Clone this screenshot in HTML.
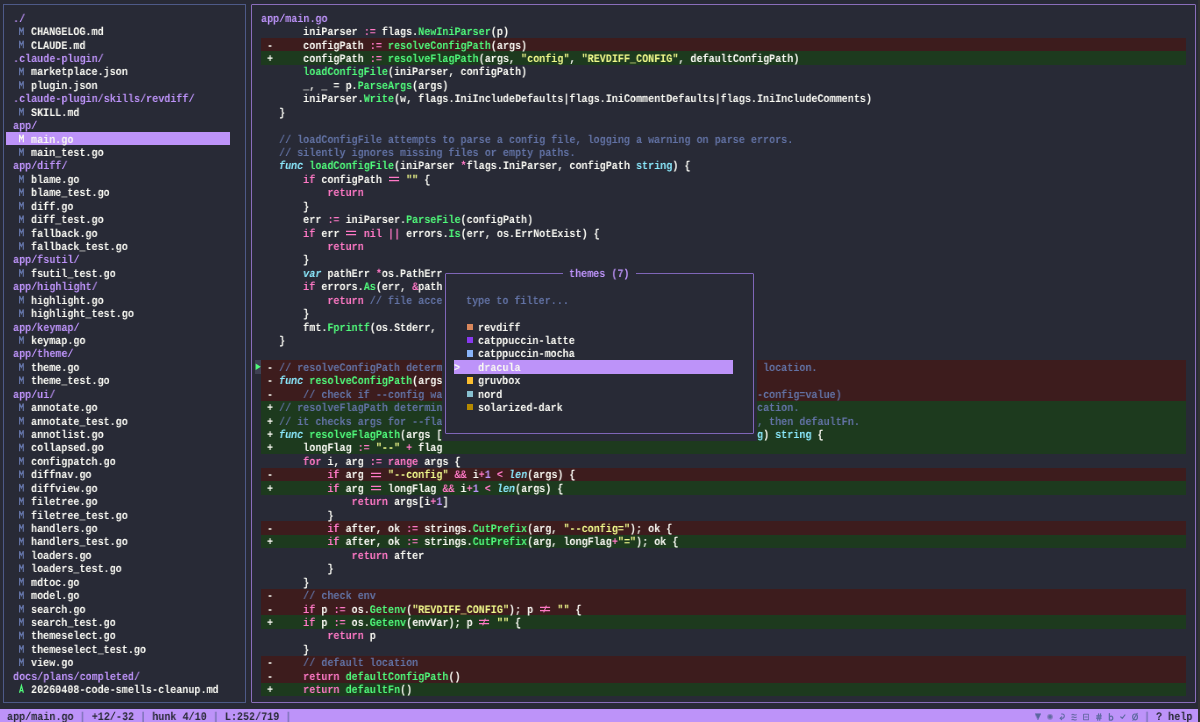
<!DOCTYPE html><html><head><meta charset="utf-8"><style>
html,body{margin:0;padding:0}
body{width:1200px;height:722px;overflow:hidden;background:#282a36;position:relative;font-family:"Liberation Mono",monospace;font-size:11.5px}
.t{position:absolute;white-space:pre;line-height:13.43px;height:13.43px;font-weight:bold;will-change:transform;text-rendering:geometricPrecision;transform-origin:0 0;transform:scale(0.87668,1.0);color:#f8f8f2}
i{font-style:normal}
.f{color:#f8f8f2} .c{color:#6272a4} .k{color:#ff79c6} .g{color:#50fa7b} .y{color:#f1fa8c}
.p{color:#bd93f9} .cy{color:#8be9fd} .ci{color:#8be9fd;font-style:italic} .d{color:#282a36} .sep{color:#7570b0} .mm{color:#6272a4;font-weight:normal;-webkit-text-stroke:0} .mk{color:#50fa7b;font-weight:normal;-webkit-text-stroke:0}
</style></head><body><div style="position:absolute;left:1198.00px;top:0.00px;width:2.00px;height:722.00px;background:#323232;"></div>
<div style="position:absolute;left:6.00px;top:132.01px;width:224.40px;height:13.43px;background:#bd93f9;"></div>
<b class="t" style="left:12.57px;top:12.64px;"><i class="p">./</i></b>
<b class="t" style="left:30.73px;top:26.07px;"><i class="f">CHANGELOG.md</i></b>
<b class="t" style="left:30.73px;top:39.50px;"><i class="f">CLAUDE.md</i></b>
<b class="t" style="left:12.57px;top:52.93px;"><i class="p">.claude-plugin/</i></b>
<b class="t" style="left:30.73px;top:66.36px;"><i class="f">marketplace.json</i></b>
<b class="t" style="left:30.73px;top:79.79px;"><i class="f">plugin.json</i></b>
<b class="t" style="left:12.57px;top:93.22px;"><i class="p">.claude-plugin/skills/revdiff/</i></b>
<b class="t" style="left:30.73px;top:106.65px;"><i class="f">SKILL.md</i></b>
<b class="t" style="left:12.57px;top:120.08px;"><i class="p">app/</i></b>
<b class="t" style="left:30.73px;top:133.51px;"><i class="f">main.go</i></b>
<b class="t" style="left:30.73px;top:146.94px;"><i class="f">main_test.go</i></b>
<b class="t" style="left:12.57px;top:160.37px;"><i class="p">app/diff/</i></b>
<b class="t" style="left:30.73px;top:173.80px;"><i class="f">blame.go</i></b>
<b class="t" style="left:30.73px;top:187.23px;"><i class="f">blame_test.go</i></b>
<b class="t" style="left:30.73px;top:200.66px;"><i class="f">diff.go</i></b>
<b class="t" style="left:30.73px;top:214.09px;"><i class="f">diff_test.go</i></b>
<b class="t" style="left:30.73px;top:227.52px;"><i class="f">fallback.go</i></b>
<b class="t" style="left:30.73px;top:240.95px;"><i class="f">fallback_test.go</i></b>
<b class="t" style="left:12.57px;top:254.38px;"><i class="p">app/fsutil/</i></b>
<b class="t" style="left:30.73px;top:267.81px;"><i class="f">fsutil_test.go</i></b>
<b class="t" style="left:12.57px;top:281.24px;"><i class="p">app/highlight/</i></b>
<b class="t" style="left:30.73px;top:294.67px;"><i class="f">highlight.go</i></b>
<b class="t" style="left:30.73px;top:308.10px;"><i class="f">highlight_test.go</i></b>
<b class="t" style="left:12.57px;top:321.53px;"><i class="p">app/keymap/</i></b>
<b class="t" style="left:30.73px;top:334.96px;"><i class="f">keymap.go</i></b>
<b class="t" style="left:12.57px;top:348.39px;"><i class="p">app/theme/</i></b>
<b class="t" style="left:30.73px;top:361.82px;"><i class="f">theme.go</i></b>
<b class="t" style="left:30.73px;top:375.25px;"><i class="f">theme_test.go</i></b>
<b class="t" style="left:12.57px;top:388.68px;"><i class="p">app/ui/</i></b>
<b class="t" style="left:30.73px;top:402.11px;"><i class="f">annotate.go</i></b>
<b class="t" style="left:30.73px;top:415.54px;"><i class="f">annotate_test.go</i></b>
<b class="t" style="left:30.73px;top:428.97px;"><i class="f">annotlist.go</i></b>
<b class="t" style="left:30.73px;top:442.40px;"><i class="f">collapsed.go</i></b>
<b class="t" style="left:30.73px;top:455.83px;"><i class="f">configpatch.go</i></b>
<b class="t" style="left:30.73px;top:469.26px;"><i class="f">diffnav.go</i></b>
<b class="t" style="left:30.73px;top:482.69px;"><i class="f">diffview.go</i></b>
<b class="t" style="left:30.73px;top:496.12px;"><i class="f">filetree.go</i></b>
<b class="t" style="left:30.73px;top:509.55px;"><i class="f">filetree_test.go</i></b>
<b class="t" style="left:30.73px;top:522.98px;"><i class="f">handlers.go</i></b>
<b class="t" style="left:30.73px;top:536.41px;"><i class="f">handlers_test.go</i></b>
<b class="t" style="left:30.73px;top:549.84px;"><i class="f">loaders.go</i></b>
<b class="t" style="left:30.73px;top:563.27px;"><i class="f">loaders_test.go</i></b>
<b class="t" style="left:30.73px;top:576.70px;"><i class="f">mdtoc.go</i></b>
<b class="t" style="left:30.73px;top:590.13px;"><i class="f">model.go</i></b>
<b class="t" style="left:30.73px;top:603.56px;"><i class="f">search.go</i></b>
<b class="t" style="left:30.73px;top:616.99px;"><i class="f">search_test.go</i></b>
<b class="t" style="left:30.73px;top:630.42px;"><i class="f">themeselect.go</i></b>
<b class="t" style="left:30.73px;top:643.85px;"><i class="f">themeselect_test.go</i></b>
<b class="t" style="left:30.73px;top:657.28px;"><i class="f">view.go</i></b>
<b class="t" style="left:12.57px;top:670.71px;"><i class="p">docs/plans/completed/</i></b>
<b class="t" style="left:30.73px;top:684.14px;"><i class="f">20260408-code-smells-cleanup.md</i></b>
<svg style="position:absolute;left:0;top:0" width="250" height="722" fill="none" stroke-width="1.2"><path d="M19.59 34.91 V27.41 L21.45 31.47 L23.32 27.41 V34.91" stroke="#6272a4"/><path d="M19.59 48.34 V40.84 L21.45 44.90 L23.32 40.84 V48.34" stroke="#6272a4"/><path d="M19.59 75.20 V67.70 L21.45 71.76 L23.32 67.70 V75.20" stroke="#6272a4"/><path d="M19.59 88.63 V81.13 L21.45 85.19 L23.32 81.13 V88.63" stroke="#6272a4"/><path d="M19.59 115.49 V107.99 L21.45 112.05 L23.32 107.99 V115.49" stroke="#6272a4"/><path d="M19.59 142.35 V134.85 L21.45 138.91 L23.32 134.85 V142.35" stroke="#f8f8f2"/><path d="M19.59 155.78 V148.28 L21.45 152.34 L23.32 148.28 V155.78" stroke="#6272a4"/><path d="M19.59 182.64 V175.14 L21.45 179.20 L23.32 175.14 V182.64" stroke="#6272a4"/><path d="M19.59 196.07 V188.57 L21.45 192.63 L23.32 188.57 V196.07" stroke="#6272a4"/><path d="M19.59 209.50 V202.00 L21.45 206.06 L23.32 202.00 V209.50" stroke="#6272a4"/><path d="M19.59 222.93 V215.43 L21.45 219.49 L23.32 215.43 V222.93" stroke="#6272a4"/><path d="M19.59 236.36 V228.86 L21.45 232.92 L23.32 228.86 V236.36" stroke="#6272a4"/><path d="M19.59 249.79 V242.29 L21.45 246.35 L23.32 242.29 V249.79" stroke="#6272a4"/><path d="M19.59 276.65 V269.15 L21.45 273.21 L23.32 269.15 V276.65" stroke="#6272a4"/><path d="M19.59 303.51 V296.01 L21.45 300.07 L23.32 296.01 V303.51" stroke="#6272a4"/><path d="M19.59 316.94 V309.44 L21.45 313.50 L23.32 309.44 V316.94" stroke="#6272a4"/><path d="M19.59 343.80 V336.30 L21.45 340.36 L23.32 336.30 V343.80" stroke="#6272a4"/><path d="M19.59 370.66 V363.16 L21.45 367.22 L23.32 363.16 V370.66" stroke="#6272a4"/><path d="M19.59 384.09 V376.59 L21.45 380.65 L23.32 376.59 V384.09" stroke="#6272a4"/><path d="M19.59 410.95 V403.45 L21.45 407.51 L23.32 403.45 V410.95" stroke="#6272a4"/><path d="M19.59 424.38 V416.88 L21.45 420.94 L23.32 416.88 V424.38" stroke="#6272a4"/><path d="M19.59 437.81 V430.31 L21.45 434.37 L23.32 430.31 V437.81" stroke="#6272a4"/><path d="M19.59 451.24 V443.74 L21.45 447.80 L23.32 443.74 V451.24" stroke="#6272a4"/><path d="M19.59 464.67 V457.17 L21.45 461.23 L23.32 457.17 V464.67" stroke="#6272a4"/><path d="M19.59 478.10 V470.60 L21.45 474.66 L23.32 470.60 V478.10" stroke="#6272a4"/><path d="M19.59 491.53 V484.03 L21.45 488.09 L23.32 484.03 V491.53" stroke="#6272a4"/><path d="M19.59 504.96 V497.46 L21.45 501.52 L23.32 497.46 V504.96" stroke="#6272a4"/><path d="M19.59 518.39 V510.89 L21.45 514.95 L23.32 510.89 V518.39" stroke="#6272a4"/><path d="M19.59 531.82 V524.32 L21.45 528.38 L23.32 524.32 V531.82" stroke="#6272a4"/><path d="M19.59 545.25 V537.75 L21.45 541.81 L23.32 537.75 V545.25" stroke="#6272a4"/><path d="M19.59 558.68 V551.18 L21.45 555.24 L23.32 551.18 V558.68" stroke="#6272a4"/><path d="M19.59 572.11 V564.61 L21.45 568.67 L23.32 564.61 V572.11" stroke="#6272a4"/><path d="M19.59 585.54 V578.04 L21.45 582.10 L23.32 578.04 V585.54" stroke="#6272a4"/><path d="M19.59 598.97 V591.47 L21.45 595.53 L23.32 591.47 V598.97" stroke="#6272a4"/><path d="M19.59 612.40 V604.90 L21.45 608.96 L23.32 604.90 V612.40" stroke="#6272a4"/><path d="M19.59 625.83 V618.33 L21.45 622.39 L23.32 618.33 V625.83" stroke="#6272a4"/><path d="M19.59 639.26 V631.76 L21.45 635.82 L23.32 631.76 V639.26" stroke="#6272a4"/><path d="M19.59 652.69 V645.19 L21.45 649.25 L23.32 645.19 V652.69" stroke="#6272a4"/><path d="M19.59 666.12 V658.62 L21.45 662.68 L23.32 658.62 V666.12" stroke="#6272a4"/><path d="M19.52 692.74 L21.45 685.64 L23.38 692.74 M20.23 690.54 H22.68" stroke="#50fa7b"/></svg>
<div style="position:absolute;left:3px;top:4px;width:241px;height:697px;border:1px solid #4e5a88;border-radius:0px"></div>
<div style="position:absolute;left:251px;top:4px;width:943px;height:697px;border:1px solid #8a6ebb;border-radius:1px"></div>
<div style="position:absolute;left:260.62px;top:38.00px;width:925.65px;height:13.43px;background:#3d1c1d;"></div>
<div style="position:absolute;left:260.62px;top:51.43px;width:925.65px;height:13.43px;background:#1d3a1e;"></div>
<div style="position:absolute;left:260.62px;top:360.32px;width:925.65px;height:13.43px;background:#3d1c1d;"></div>
<div style="position:absolute;left:260.62px;top:373.75px;width:925.65px;height:13.43px;background:#3d1c1d;"></div>
<div style="position:absolute;left:260.62px;top:387.18px;width:925.65px;height:13.43px;background:#3d1c1d;"></div>
<div style="position:absolute;left:260.62px;top:400.61px;width:925.65px;height:13.43px;background:#1d3a1e;"></div>
<div style="position:absolute;left:260.62px;top:414.04px;width:925.65px;height:13.43px;background:#1d3a1e;"></div>
<div style="position:absolute;left:260.62px;top:427.47px;width:925.65px;height:13.43px;background:#1d3a1e;"></div>
<div style="position:absolute;left:260.62px;top:440.90px;width:925.65px;height:13.43px;background:#1d3a1e;"></div>
<div style="position:absolute;left:260.62px;top:467.76px;width:925.65px;height:13.43px;background:#3d1c1d;"></div>
<div style="position:absolute;left:260.62px;top:481.19px;width:925.65px;height:13.43px;background:#1d3a1e;"></div>
<div style="position:absolute;left:260.62px;top:521.48px;width:925.65px;height:13.43px;background:#3d1c1d;"></div>
<div style="position:absolute;left:260.62px;top:534.91px;width:925.65px;height:13.43px;background:#1d3a1e;"></div>
<div style="position:absolute;left:260.62px;top:588.63px;width:925.65px;height:13.43px;background:#3d1c1d;"></div>
<div style="position:absolute;left:260.62px;top:602.06px;width:925.65px;height:13.43px;background:#3d1c1d;"></div>
<div style="position:absolute;left:260.62px;top:615.49px;width:925.65px;height:13.43px;background:#1d3a1e;"></div>
<div style="position:absolute;left:260.62px;top:655.78px;width:925.65px;height:13.43px;background:#3d1c1d;"></div>
<div style="position:absolute;left:260.62px;top:669.21px;width:925.65px;height:13.43px;background:#3d1c1d;"></div>
<div style="position:absolute;left:260.62px;top:682.64px;width:925.65px;height:13.43px;background:#1d3a1e;"></div>
<div style="position:absolute;left:254.57px;top:360.32px;width:6.05px;height:13.43px;background:#3e4052;"></div>
<svg style="position:absolute;left:254.57px;top:360.32px" width="6.05" height="13.43" viewBox="0 0 6.05 13.43"><path d="M0.6 3.4 L5.8 6.7 L0.6 10 Z" fill="#50fa7b"/></svg>
<b class="t" style="left:260.62px;top:12.64px;"><i class="p">app/main.go</i></b>
<b class="t" style="left:278.78px;top:26.07px;"><i class="f">    iniParser </i><i class="k">:=</i><i class="f"> flags.</i><i class="g">NewIniParser</i><i class="f">(p)</i></b>
<b class="t" style="left:266.68px;top:39.50px;"><i class="f">-</i></b>
<b class="t" style="left:278.78px;top:39.50px;"><i class="f">    configPath </i><i class="k">:=</i><i class="f"> </i><i class="g">resolveConfigPath</i><i class="f">(args)</i></b>
<b class="t" style="left:266.68px;top:52.93px;"><i class="f">+</i></b>
<b class="t" style="left:278.78px;top:52.93px;"><i class="f">    configPath </i><i class="k">:=</i><i class="f"> </i><i class="g">resolveFlagPath</i><i class="f">(args, </i><i class="y">&quot;config&quot;</i><i class="f">, </i><i class="y">&quot;REVDIFF_CONFIG&quot;</i><i class="f">, defaultConfigPath)</i></b>
<b class="t" style="left:278.78px;top:66.36px;"><i class="f">    </i><i class="g">loadConfigFile</i><i class="f">(iniParser, configPath)</i></b>
<b class="t" style="left:278.78px;top:79.79px;"><i class="f">    _, _ = p.</i><i class="g">ParseArgs</i><i class="f">(args)</i></b>
<b class="t" style="left:278.78px;top:93.22px;"><i class="f">    iniParser.</i><i class="g">Write</i><i class="f">(w, flags.IniIncludeDefaults|flags.IniCommentDefaults|flags.IniIncludeComments)</i></b>
<b class="t" style="left:278.78px;top:106.65px;"><i class="f">}</i></b>
<b class="t" style="left:278.78px;top:133.51px;"><i class="c">// loadConfigFile attempts to parse a config file, logging a warning on parse errors.</i></b>
<b class="t" style="left:278.78px;top:146.94px;"><i class="c">// silently ignores missing files or empty paths.</i></b>
<b class="t" style="left:278.78px;top:160.37px;"><i class="ci">func</i><i class="f"> </i><i class="g">loadConfigFile</i><i class="f">(iniParser </i><i class="k">*</i><i class="f">flags.IniParser, configPath </i><i class="cy">string</i><i class="f">) {</i></b>
<b class="t" style="left:278.78px;top:173.80px;"><i class="f">    </i><i class="k">if</i><i class="f"> configPath </i><i class="k">  </i><i class="f"> </i><i class="y">&quot;&quot;</i><i class="f"> {</i></b>
<b class="t" style="left:278.78px;top:187.23px;"><i class="f">        </i><i class="k">return</i></b>
<b class="t" style="left:278.78px;top:200.66px;"><i class="f">    }</i></b>
<b class="t" style="left:278.78px;top:214.09px;"><i class="f">    err </i><i class="k">:=</i><i class="f"> iniParser.</i><i class="g">ParseFile</i><i class="f">(configPath)</i></b>
<b class="t" style="left:278.78px;top:227.52px;"><i class="f">    </i><i class="k">if</i><i class="f"> err </i><i class="k">  </i><i class="f"> </i><i class="k">nil</i><i class="f"> </i><i class="k">||</i><i class="f"> errors.</i><i class="g">Is</i><i class="f">(err, os.ErrNotExist) {</i></b>
<b class="t" style="left:278.78px;top:240.95px;"><i class="f">        </i><i class="k">return</i></b>
<b class="t" style="left:278.78px;top:254.38px;"><i class="f">    }</i></b>
<b class="t" style="left:278.78px;top:267.81px;"><i class="f">    </i><i class="ci">var</i><i class="f"> pathErr </i><i class="k">*</i><i class="f">os.PathErr</i></b>
<b class="t" style="left:278.78px;top:281.24px;"><i class="f">    </i><i class="k">if</i><i class="f"> errors.</i><i class="g">As</i><i class="f">(err, </i><i class="k">&amp;</i><i class="f">path</i></b>
<b class="t" style="left:278.78px;top:294.67px;"><i class="f">        </i><i class="k">return</i><i class="f"> </i><i class="c">// file acce</i></b>
<b class="t" style="left:278.78px;top:308.10px;"><i class="f">    }</i></b>
<b class="t" style="left:278.78px;top:321.53px;"><i class="f">    fmt.</i><i class="g">Fprintf</i><i class="f">(os.Stderr, </i></b>
<b class="t" style="left:278.78px;top:334.96px;"><i class="f">}</i></b>
<b class="t" style="left:266.68px;top:361.82px;"><i class="f">-</i></b>
<b class="t" style="left:278.78px;top:361.82px;"><i class="c">// resolveConfigPath determ</i></b>
<b class="t" style="left:266.68px;top:375.25px;"><i class="f">-</i></b>
<b class="t" style="left:278.78px;top:375.25px;"><i class="ci">func</i><i class="f"> </i><i class="g">resolveConfigPath</i><i class="f">(args</i></b>
<b class="t" style="left:266.68px;top:388.68px;"><i class="f">-</i></b>
<b class="t" style="left:278.78px;top:388.68px;"><i class="f">    </i><i class="c">// check if --config wa</i></b>
<b class="t" style="left:266.68px;top:402.11px;"><i class="f">+</i></b>
<b class="t" style="left:278.78px;top:402.11px;"><i class="c">// resolveFlagPath determin</i></b>
<b class="t" style="left:266.68px;top:415.54px;"><i class="f">+</i></b>
<b class="t" style="left:278.78px;top:415.54px;"><i class="c">// it checks args for --fla</i></b>
<b class="t" style="left:266.68px;top:428.97px;"><i class="f">+</i></b>
<b class="t" style="left:278.78px;top:428.97px;"><i class="ci">func</i><i class="f"> </i><i class="g">resolveFlagPath</i><i class="f">(args [</i></b>
<b class="t" style="left:266.68px;top:442.40px;"><i class="f">+</i></b>
<b class="t" style="left:278.78px;top:442.40px;"><i class="f">    longFlag </i><i class="k">:=</i><i class="f"> </i><i class="y">&quot;--&quot;</i><i class="f"> </i><i class="k">+</i><i class="f"> flag</i></b>
<b class="t" style="left:278.78px;top:455.83px;"><i class="f">    </i><i class="k">for</i><i class="f"> i, arg </i><i class="k">:=</i><i class="f"> </i><i class="k">range</i><i class="f"> args {</i></b>
<b class="t" style="left:266.68px;top:469.26px;"><i class="f">-</i></b>
<b class="t" style="left:278.78px;top:469.26px;"><i class="f">        </i><i class="k">if</i><i class="f"> arg </i><i class="k">  </i><i class="f"> </i><i class="y">&quot;--config&quot;</i><i class="f"> </i><i class="k">&amp;&amp;</i><i class="f"> i</i><i class="k">+</i><i class="p">1</i><i class="f"> </i><i class="k">&lt;</i><i class="f"> </i><i class="ci">len</i><i class="f">(args) {</i></b>
<b class="t" style="left:266.68px;top:482.69px;"><i class="f">+</i></b>
<b class="t" style="left:278.78px;top:482.69px;"><i class="f">        </i><i class="k">if</i><i class="f"> arg </i><i class="k">  </i><i class="f"> longFlag </i><i class="k">&amp;&amp;</i><i class="f"> i</i><i class="k">+</i><i class="p">1</i><i class="f"> </i><i class="k">&lt;</i><i class="f"> </i><i class="ci">len</i><i class="f">(args) {</i></b>
<b class="t" style="left:278.78px;top:496.12px;"><i class="f">            </i><i class="k">return</i><i class="f"> args[i</i><i class="k">+</i><i class="p">1</i><i class="f">]</i></b>
<b class="t" style="left:278.78px;top:509.55px;"><i class="f">        }</i></b>
<b class="t" style="left:266.68px;top:522.98px;"><i class="f">-</i></b>
<b class="t" style="left:278.78px;top:522.98px;"><i class="f">        </i><i class="k">if</i><i class="f"> after, ok </i><i class="k">:=</i><i class="f"> strings.</i><i class="g">CutPrefix</i><i class="f">(arg, </i><i class="y">&quot;--config=&quot;</i><i class="f">); ok {</i></b>
<b class="t" style="left:266.68px;top:536.41px;"><i class="f">+</i></b>
<b class="t" style="left:278.78px;top:536.41px;"><i class="f">        </i><i class="k">if</i><i class="f"> after, ok </i><i class="k">:=</i><i class="f"> strings.</i><i class="g">CutPrefix</i><i class="f">(arg, longFlag</i><i class="k">+</i><i class="y">&quot;=&quot;</i><i class="f">); ok {</i></b>
<b class="t" style="left:278.78px;top:549.84px;"><i class="f">            </i><i class="k">return</i><i class="f"> after</i></b>
<b class="t" style="left:278.78px;top:563.27px;"><i class="f">        }</i></b>
<b class="t" style="left:278.78px;top:576.70px;"><i class="f">    }</i></b>
<b class="t" style="left:266.68px;top:590.13px;"><i class="f">-</i></b>
<b class="t" style="left:278.78px;top:590.13px;"><i class="f">    </i><i class="c">// check env</i></b>
<b class="t" style="left:266.68px;top:603.56px;"><i class="f">-</i></b>
<b class="t" style="left:278.78px;top:603.56px;"><i class="f">    </i><i class="k">if</i><i class="f"> p </i><i class="k">:=</i><i class="f"> os.</i><i class="g">Getenv</i><i class="f">(</i><i class="y">&quot;REVDIFF_CONFIG&quot;</i><i class="f">); p </i><i class="k">  </i><i class="f"> </i><i class="y">&quot;&quot;</i><i class="f"> {</i></b>
<b class="t" style="left:266.68px;top:616.99px;"><i class="f">+</i></b>
<b class="t" style="left:278.78px;top:616.99px;"><i class="f">    </i><i class="k">if</i><i class="f"> p </i><i class="k">:=</i><i class="f"> os.</i><i class="g">Getenv</i><i class="f">(envVar); p </i><i class="k">  </i><i class="f"> </i><i class="y">&quot;&quot;</i><i class="f"> {</i></b>
<b class="t" style="left:278.78px;top:630.42px;"><i class="f">        </i><i class="k">return</i><i class="f"> p</i></b>
<b class="t" style="left:278.78px;top:643.85px;"><i class="f">    }</i></b>
<b class="t" style="left:266.68px;top:657.28px;"><i class="f">-</i></b>
<b class="t" style="left:278.78px;top:657.28px;"><i class="f">    </i><i class="c">// default location</i></b>
<b class="t" style="left:266.68px;top:670.71px;"><i class="f">-</i></b>
<b class="t" style="left:278.78px;top:670.71px;"><i class="f">    </i><i class="k">return</i><i class="f"> </i><i class="g">defaultConfigPath</i><i class="f">()</i></b>
<b class="t" style="left:266.68px;top:684.14px;"><i class="f">+</i></b>
<b class="t" style="left:278.78px;top:684.14px;"><i class="f">    </i><i class="k">return</i><i class="f"> </i><i class="g">defaultFn</i><i class="f">()</i></b>
<b class="t" style="left:756.73px;top:361.82px;"><i class="c"> location.</i></b>
<b class="t" style="left:756.73px;top:388.68px;"><i class="c">-config=value)</i></b>
<b class="t" style="left:756.73px;top:402.11px;"><i class="c">cation.</i></b>
<b class="t" style="left:756.73px;top:415.54px;"><i class="c">, then defaultFn.</i></b>
<b class="t" style="left:756.73px;top:428.97px;"><i class="cy">g</i><i class="f">) </i><i class="cy">string</i><i class="f"> {</i></b>
<svg style="position:absolute;left:387.68px;top:172.30px" width="12.1" height="13.43" viewBox="0 0 12.1 13.43" fill="none"><path d="M1.0 5.4 H11.1 M1.0 8.6 H11.1" stroke="#ff79c6" stroke-width="1.15"/></svg>
<svg style="position:absolute;left:345.32px;top:226.02px" width="12.1" height="13.43" viewBox="0 0 12.1 13.43" fill="none"><path d="M1.0 5.4 H11.1 M1.0 8.6 H11.1" stroke="#ff79c6" stroke-width="1.15"/></svg>
<svg style="position:absolute;left:369.53px;top:467.76px" width="12.1" height="13.43" viewBox="0 0 12.1 13.43" fill="none"><path d="M1.0 5.4 H11.1 M1.0 8.6 H11.1" stroke="#ff79c6" stroke-width="1.15"/></svg>
<svg style="position:absolute;left:369.53px;top:481.19px" width="12.1" height="13.43" viewBox="0 0 12.1 13.43" fill="none"><path d="M1.0 5.4 H11.1 M1.0 8.6 H11.1" stroke="#ff79c6" stroke-width="1.15"/></svg>
<svg style="position:absolute;left:538.92px;top:602.06px" width="12.1" height="13.43" viewBox="0 0 12.1 13.43" fill="none"><path d="M1.0 5.4 H11.1 M1.0 8.6 H11.1" stroke="#ff79c6" stroke-width="1.15"/><path d="M7.4 3.6 L4.7 10.4" stroke="#ff79c6" stroke-width="1.1"/></svg>
<svg style="position:absolute;left:478.43px;top:615.49px" width="12.1" height="13.43" viewBox="0 0 12.1 13.43" fill="none"><path d="M1.0 5.4 H11.1 M1.0 8.6 H11.1" stroke="#ff79c6" stroke-width="1.15"/><path d="M7.4 3.6 L4.7 10.4" stroke="#ff79c6" stroke-width="1.1"/></svg>
<div style="position:absolute;left:442.12px;top:266.31px;width:314.60px;height:174.59px;background:#282a36;"></div>
<div style="position:absolute;left:445px;top:273px;width:307px;height:159px;border:1px solid #7f66b8;border-radius:1px"></div>
<div style="position:absolute;left:563.12px;top:270.00px;width:72.60px;height:5.00px;background:#282a36;"></div>
<b class="t" style="left:569.17px;top:267.81px;"><i class="p">themes (7)</i></b>
<b class="t" style="left:466.32px;top:294.67px;"><i class="c">type to filter...</i></b>
<div style="position:absolute;left:454.23px;top:360.32px;width:278.30px;height:13.43px;background:#bd93f9;"></div>
<div style="position:absolute;left:466.62px;top:323.63px;width:6.20px;height:6.20px;background:#d9875c;"></div>
<b class="t" style="left:478.43px;top:321.53px;"><i class="f">revdiff</i></b>
<div style="position:absolute;left:466.62px;top:337.06px;width:6.20px;height:6.20px;background:#8839ef;"></div>
<b class="t" style="left:478.43px;top:334.96px;"><i class="f">catppuccin-latte</i></b>
<div style="position:absolute;left:466.62px;top:350.49px;width:6.20px;height:6.20px;background:#89b4fa;"></div>
<b class="t" style="left:478.43px;top:348.39px;"><i class="f">catppuccin-mocha</i></b>
<b class="t" style="left:454.23px;top:361.82px;"><i class="f">&gt;   dracula</i></b>
<div style="position:absolute;left:466.62px;top:377.35px;width:6.20px;height:6.20px;background:#fabd2f;"></div>
<b class="t" style="left:478.43px;top:375.25px;"><i class="f">gruvbox</i></b>
<div style="position:absolute;left:466.62px;top:390.78px;width:6.20px;height:6.20px;background:#88c0d0;"></div>
<b class="t" style="left:478.43px;top:388.68px;"><i class="f">nord</i></b>
<div style="position:absolute;left:466.62px;top:404.21px;width:6.20px;height:6.20px;background:#b58900;"></div>
<b class="t" style="left:478.43px;top:402.11px;"><i class="f">solarized-dark</i></b>
<div style="position:absolute;left:0.00px;top:709.00px;width:1198.00px;height:13.00px;background:#bd93f9;"></div>
<b class="t" style="left:6.52px;top:711.00px;"><i class="d">app/main.go </i><i class="sep">|</i><i class="d"> +12/-32 </i><i class="sep">|</i><i class="d"> hunk 4/10 </i><i class="sep">|</i><i class="d"> L:252/719 </i><i class="sep">|</i></b>
<b class="t" style="left:1143.92px;top:711.00px;"><i class="sep">|</i><i class="d"> ? help</i></b>
<svg style="position:absolute;left:1035.02px;top:709.50px" width="6.05" height="13.43" viewBox="0 0 6.05 13.43" fill="none" stroke="#5f6aa2" stroke-width="1.1" stroke-linecap="round" stroke-linejoin="round"><path d="M0.3 3.7 H5.8 L3.05 9.6 Z" fill="#5a68a0" stroke="#5a68a0" stroke-width="0.5"/></svg>
<svg style="position:absolute;left:1047.12px;top:709.50px" width="6.05" height="13.43" viewBox="0 0 6.05 13.43" fill="none" stroke="#5f6aa2" stroke-width="1.1" stroke-linecap="round" stroke-linejoin="round"><circle cx="3.05" cy="6.8" r="2.9" fill="#8a7cc2" stroke="none"/><circle cx="3.05" cy="6.8" r="1.7" fill="#5f6aa2" stroke="none"/></svg>
<svg style="position:absolute;left:1059.22px;top:709.50px" width="6.05" height="13.43" viewBox="0 0 6.05 13.43" fill="none" stroke="#5f6aa2" stroke-width="1.1" stroke-linecap="round" stroke-linejoin="round"><path d="M2.6 4.0 Q5.4 3.6 5.3 6.2 Q5.2 8.2 2.6 8.3 H1.4"/><path d="M2.7 6.8 L1.1 8.3 L2.7 9.7"/></svg>
<svg style="position:absolute;left:1071.32px;top:709.50px" width="6.05" height="13.43" viewBox="0 0 6.05 13.43" fill="none" stroke="#5f6aa2" stroke-width="1.1" stroke-linecap="round" stroke-linejoin="round"><path d="M0.9 4.7 Q1.9 4.0 3.0 4.7 Q4.1 5.4 5.2 4.7 M0.9 7.2 Q1.9 6.5 3.0 7.2 Q4.1 7.9 5.2 7.2 M0.9 9.7 Q1.9 9.0 3.0 9.7 Q4.1 10.4 5.2 9.7" stroke="#6a6aa8"/></svg>
<svg style="position:absolute;left:1083.42px;top:709.50px" width="6.05" height="13.43" viewBox="0 0 6.05 13.43" fill="none" stroke="#5f6aa2" stroke-width="1.1" stroke-linecap="round" stroke-linejoin="round"><rect x="0.5" y="4.3" width="5.2" height="5.5" rx="0.4" stroke="#6e6cac"/><path d="M1.8 7.05 H4.3" stroke="#6e6cac"/></svg>
<svg style="position:absolute;left:1095.52px;top:709.50px" width="6.05" height="13.43" viewBox="0 0 6.05 13.43" fill="none" stroke="#5f6aa2" stroke-width="1.1" stroke-linecap="round" stroke-linejoin="round"><path d="M2.6 3.9 L1.7 10.1 M4.6 3.9 L3.7 10.1 M0.7 5.9 H5.4 M0.5 8.1 H5.2" stroke-width="1.2"/></svg>
<svg style="position:absolute;left:1107.62px;top:709.50px" width="6.05" height="13.43" viewBox="0 0 6.05 13.43" fill="none" stroke="#5f6aa2" stroke-width="1.1" stroke-linecap="round" stroke-linejoin="round"><path d="M1.4 3.6 V10 M1.4 6.6 Q4.8 5.2 4.8 8.2 Q4.8 10.8 1.4 9.8" stroke-width="1.3"/></svg>
<svg style="position:absolute;left:1119.72px;top:709.50px" width="6.05" height="13.43" viewBox="0 0 6.05 13.43" fill="none" stroke="#5f6aa2" stroke-width="1.1" stroke-linecap="round" stroke-linejoin="round"><path d="M0.8 7.0 L2.3 8.4 L4.9 5.0" stroke-width="1.2"/></svg>
<svg style="position:absolute;left:1131.82px;top:709.50px" width="6.05" height="13.43" viewBox="0 0 6.05 13.43" fill="none" stroke="#5f6aa2" stroke-width="1.1" stroke-linecap="round" stroke-linejoin="round"><ellipse cx="3.05" cy="6.9" rx="2.4" ry="2.9" stroke-width="1.2"/><path d="M5.2 3.4 L0.9 10.2" stroke-width="1.1"/></svg></body></html>
